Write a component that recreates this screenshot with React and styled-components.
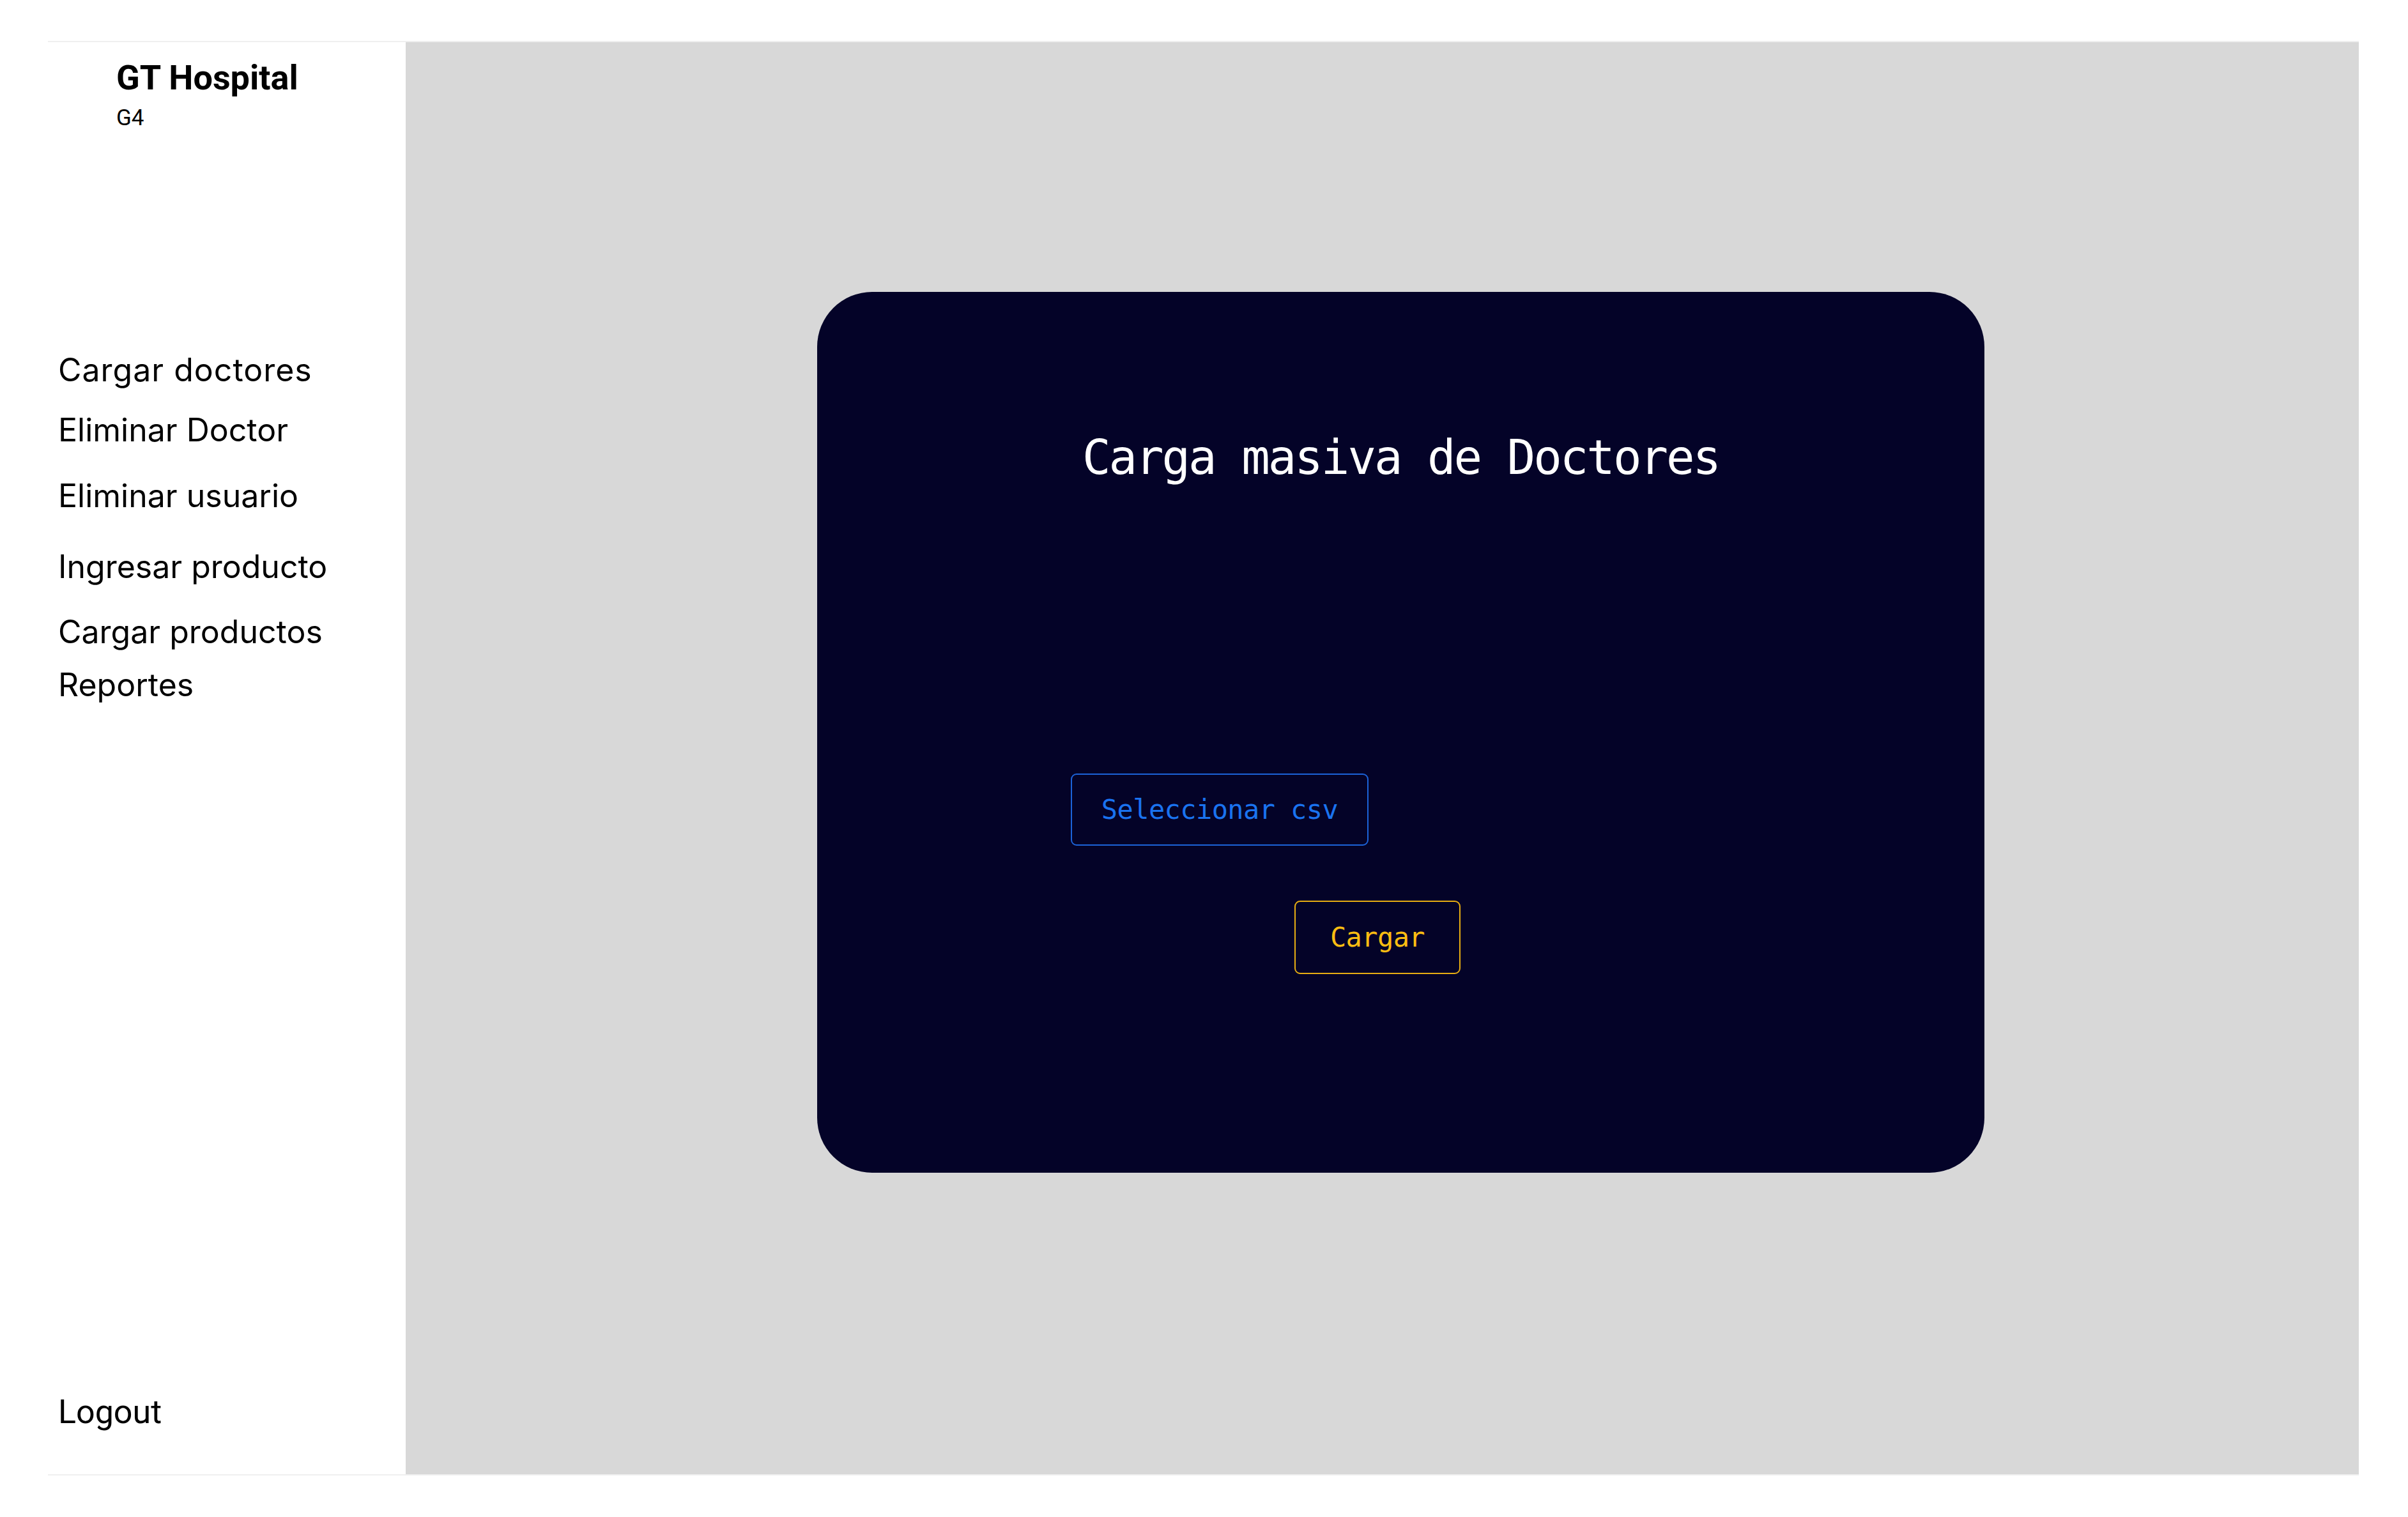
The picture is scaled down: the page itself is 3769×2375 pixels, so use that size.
import React from "react"
import styled, { createGlobalStyle } from "styled-components"

const Global = createGlobalStyle`
    html, body {
        margin: 0;
        padding: 0;
        background: #fff;
    }
    * { box-sizing: border-box; }
`

const Page = styled.div`
    width: 3769px;
    height: 2375px;
    padding: 64px 77px 65px 75px;
    background: #fff;
`
const Frame = styled.div`
    display: flex;
    height: 100%;
    border-top: 2px solid #efefef;
    border-bottom: 2px solid #efefef;
`
const Sidebar = styled.aside`
    width: 560px;
    flex-shrink: 0;
    display: flex;
    flex-direction: column;
    background: #fff;
    padding: 24px 0 67px 0;
`
const Brand = styled.div`
    padding-left: 107px;
    font-family: Roboto, "Liberation Sans", sans-serif;
    color: #000;
`
const BrandName = styled.div`
    font-size: 54px;
    font-weight: 700;
`
const BrandSub = styled.div`
    margin-top: 11px;
    font-size: 35px;
    font-weight: 400;
`
const Nav = styled.nav`
    display: flex;
    flex-direction: column;
    margin-top: 343px;
    padding-left: 16px;
`
const NavItem = styled.a`
    display: block;
    margin-top: ${p => p.$gap || 0}px;
    font-family: Inter, "Noto Sans", sans-serif;
    font-size: 50px;
    line-height: 62px;
    letter-spacing: ${p => p.$track || 0}px;
    color: #000;
    text-decoration: none;
    cursor: pointer;
`
const Logout = styled.a`
    margin-top: auto;
    padding-left: 16px;
    font-family: Roboto, "Liberation Sans", sans-serif;
    font-size: 52px;
    color: #000;
    cursor: pointer;
`
const Main = styled.main`
    flex: 1;
    background: #d8d8d8;
    padding: 391px 0 0 644px;
`
const Card = styled.section`
    width: 1827px;
    height: 1379px;
    background: #040328;
    border-radius: 86px;
    display: flex;
    flex-direction: column;
    padding-top: 222px;
`
const Title = styled.h1`
    margin: 0;
    text-align: center;
    font-family: "DejaVu Sans Mono", "Liberation Mono", monospace;
    font-weight: 400;
    font-size: 74px;
    line-height: 74px;
    letter-spacing: -3px;
    color: #fff;
`
const OutlineButton = styled.button`
    align-self: flex-start;
    margin-left: ${p => p.$offset}px;
    margin-top: ${p => p.$top}px;
    width: ${p => p.$w}px;
    height: ${p => p.$h}px;
    display: flex;
    align-items: center;
    justify-content: center;
    background: transparent;
    border: 2px solid ${p => p.$color};
    border-radius: 9px;
    color: ${p => p.$text};
    font-family: "DejaVu Sans Mono", "Liberation Mono", monospace;
    font-size: 42px;
    letter-spacing: -0.6px;
    cursor: pointer;
`

const links = [
    { label: "Cargar doctores", gap: 0, track: 1 },
    { label: "Eliminar Doctor", gap: 32 },
    { label: "Eliminar usuario", gap: 41 },
    { label: "Ingresar producto", gap: 49 },
    { label: "Cargar productos", gap: 40 },
    { label: "Reportes", gap: 21 },
]

export default function App() {
    return (
        <Page>
            <Global />
            <Frame>
                <Sidebar>
                    <Brand>
                        <BrandName>GT Hospital</BrandName>
                        <BrandSub>G4</BrandSub>
                    </Brand>
                    <Nav>
                        {links.map(l => (
                            <NavItem key={l.label} $gap={l.gap} $track={l.track}>{l.label}</NavItem>
                        ))}
                    </Nav>
                    <Logout>Logout</Logout>
                </Sidebar>
                <Main>
                    <Card>
                        <Title>Carga masiva de Doctores</Title>
                        <OutlineButton $offset={397} $top={458} $w={466} $h={113}
                            $color="#1c63d9" $text="#1a73f0">
                            Seleccionar csv
                        </OutlineButton>
                        <OutlineButton $offset={747} $top={86} $w={260} $h={115}
                            $color="#e7ad12" $text="#fbbd12">
                            Cargar
                        </OutlineButton>
                    </Card>
                </Main>
            </Frame>
        </Page>
    )
}
